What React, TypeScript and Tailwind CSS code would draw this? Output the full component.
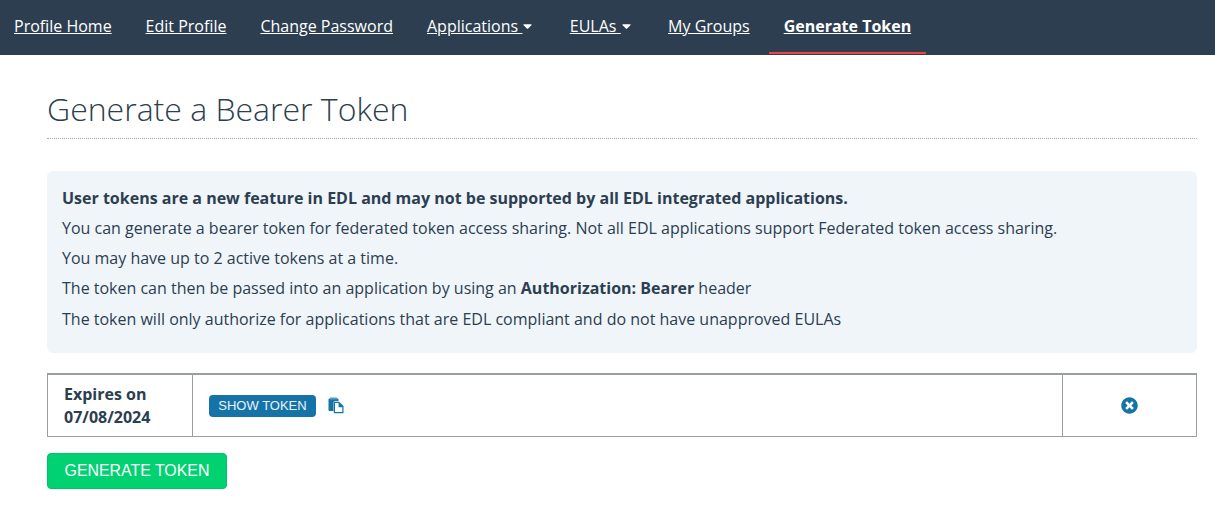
import React from 'react';
import { FaTimesCircle, FaCaretDown } from 'react-icons/fa';

const navItems = ['Profile Home', 'Edit Profile', 'Change Password', 'Applications', 'EULAs', 'My Groups'];

function CopyIcon() {
  return (
    <svg width="17" height="17" viewBox="0 0 17 17" aria-hidden>
      <path d="M0.5 2.5a1 1 0 0 1 1-1h8a1 1 0 0 1 1 1V4H7A1.5 1.5 0 0 0 5.5 5.5V14h-4a1 1 0 0 1-1-1z" fill="#1673a8" />
      <rect x="2" y="0.5" width="7" height="2" fill="#5b9ac2" />
      <path d="M5.8 4.8h5.4l4.3 4.3v7.2H5.8z" fill="#1673a8" />
      <path d="M7 6h3.6v4.2h3.7v4.9H7z" fill="#fff" />
    </svg>
  );
}

export default function App() {
  return (
    <div className="min-h-[508px] bg-white font-['Open_Sans',sans-serif] text-[#2c3e50]">
      {/* nav bar */}
      <nav className="flex h-[55px] bg-[#2c3e50] text-[16px] text-white">
        <ul className="-ml-px flex gap-[4px]">
          {navItems.map((item) => (
            <li key={item} className="flex items-center px-[15px] pb-[4px]">
              <a href="#" className="flex items-center underline">
                {item}
                {(item === 'Applications' || item === 'EULAs') && (
                  <>
                    <span className="underline">&nbsp;</span>
                    <FaCaretDown className="mr-[3.5px] ml-[1px] h-[14px] w-[9px]" />
                  </>
                )}
              </a>
            </li>
          ))}
          <li className="flex h-[54px] items-center border-b-2 border-[#ef4444] px-[15px] pb-[1px] font-bold">
            <a href="#" className="underline">Generate Token</a>
          </li>
        </ul>
      </nav>

      <main className="pt-[32px] pr-[18px] pl-[47px]">
        <h1 className="border-b border-dotted border-[#aaa] pb-[8px] text-[32px] leading-[43px] font-light">
          Generate a Bearer Token
        </h1>

        {/* info box */}
        <div className="mt-[32px] h-[182px] rounded-md bg-[#f0f5fa] px-[15px] pt-[12px] text-[16px] leading-[30.12px]">
          <p className="font-bold">User tokens are a new feature in EDL and may not be supported by all EDL integrated applications.</p>
          <p>You can generate a bearer token for federated token access sharing. Not all EDL applications support Federated token access sharing.</p>
          <p>You may have up to 2 active tokens at a time.</p>
          <p>The token can then be passed into an application by using an <b>Authorization: Bearer</b> header</p>
          <p>The token will only authorize for applications that are EDL compliant and do not have unapproved EULAs</p>
        </div>

        {/* token table */}
        <div className="mt-[20px] flex h-[64px] border border-t-2 border-[#979f9f]">
          <div className="flex w-[145px] items-center border-r border-[#979f9f] pl-[16px] text-[16px] leading-[23px] font-bold">
            <span>Expires on<br />07/08/2024</span>
          </div>
          <div className="flex flex-1 items-center gap-[12px] pl-[16px]">
            <button className="h-[22px] w-[107px] rounded-[4px] bg-[#1673a8] font-['Liberation_Sans',sans-serif] text-[13px] text-[#eaf3f8]">
              SHOW TOKEN
            </button>
            <CopyIcon />
          </div>
          <div className="flex w-[134px] items-center justify-center border-l border-[#979f9f]">
            <FaTimesCircle className="h-[17px] w-[17px] text-[#1673a8]" />
          </div>
        </div>

        <button className="mt-[16px] h-[36px] w-[180px] rounded-[4px] border border-[#00c46c] bg-[#00d272] font-['Liberation_Sans',sans-serif] text-[15.9px] text-white">
          GENERATE TOKEN
        </button>
      </main>
    </div>
  );
}
